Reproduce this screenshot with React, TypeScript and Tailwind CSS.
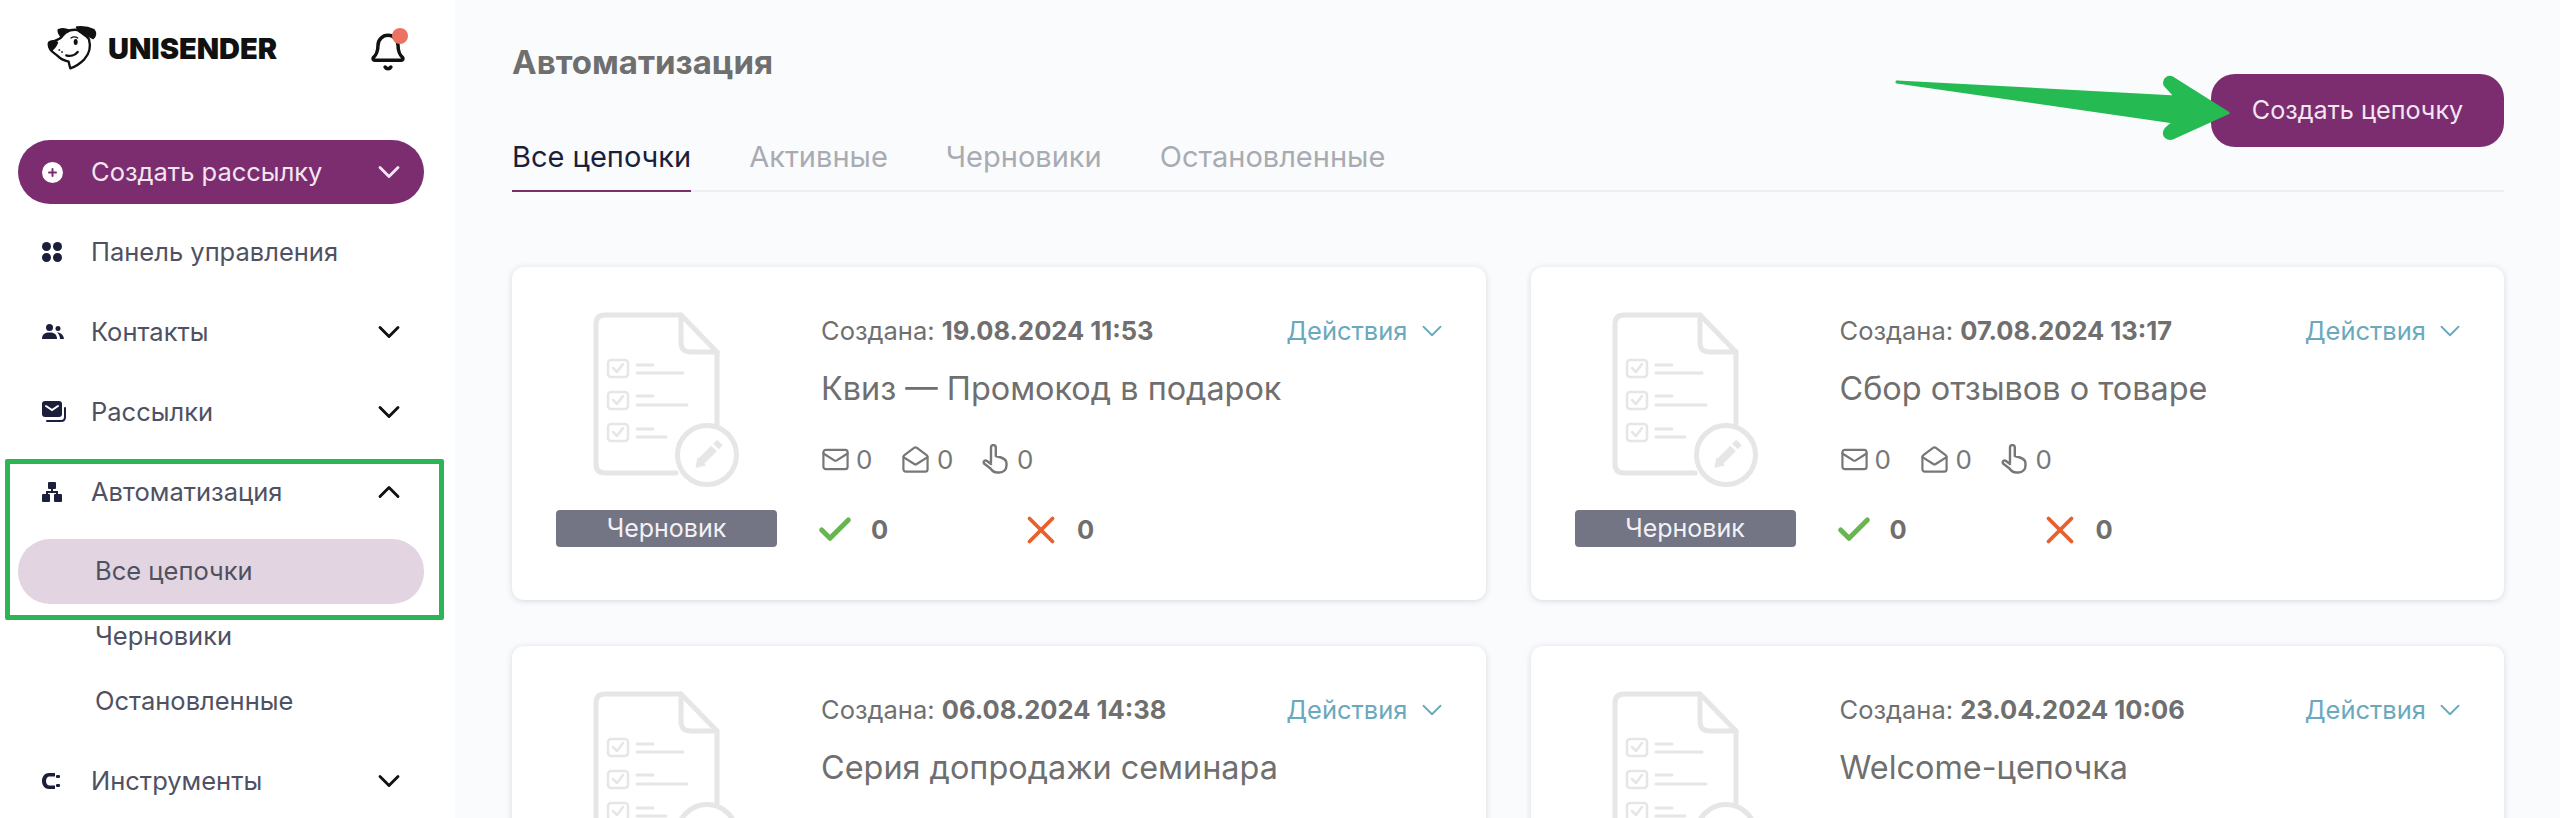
import { Bell, Check, ChevronDown, ChevronUp, Mail, MailOpen, X } from "lucide-react";
import type { ReactNode } from "react";

type Chain = {
  created: string;
  title: string;
};

const chains: Chain[] = [
  { created: "19.08.2024 11:53", title: "Квиз — Промокод в подарок" },
  { created: "07.08.2024 13:17", title: "Сбор отзывов о товаре" },
  { created: "06.08.2024 14:38", title: "Серия допродажи семинара" },
  { created: "23.04.2024 10:06", title: "Welcome-цепочка" },
];

function DogLogo() {
  return (
    <svg width="50" height="45" viewBox="20 15 150 135" fill="none" stroke="#111" strokeWidth="7" strokeLinejoin="round" strokeLinecap="round">
      <path d="M32 68 C45 60 58 60 64 50 C66 44 70 38 76 36 C88 30 100 28 112 30 C125 40 140 48 146 58 C152 80 148 100 132 118 C120 130 105 140 90 145 C88 138 86 130 85 125 C72 122 60 116 50 106 C42 100 34 95 30 88 Z" />
      <path d="M55 30 C65 26 78 28 86 32 C78 36 70 40 64 50 C58 44 54 38 55 30 Z" fill="#111" />
      <path d="M110 22 C128 20 148 24 160 30 C166 38 166 48 158 54 C150 50 140 44 128 38 C120 34 114 28 110 22 Z" fill="#111" />
      <path d="M26 68 C32 62 44 62 50 68 C46 78 40 86 32 90 C26 84 24 76 26 68 Z" fill="#111" />
      <ellipse cx="106" cy="66" rx="6" ry="9" fill="#111" stroke="none" />
      <path d="M92 54 C98 50 106 50 112 54" strokeWidth="4" />
      <path d="M78 106 C90 110 104 106 112 96" />
      <path d="M56 90 H58 M64 96 H66" strokeWidth="4" />
    </svg>
  );
}

function GridIcon() {
  return (
    <div className="grid w-5 grid-cols-2 gap-[2px]">
      <span className="h-[9px] w-[9px] rounded-full bg-[#1c1f3c]" />
      <span className="h-[9px] w-[9px] rounded-full bg-[#1c1f3c]" />
      <span className="h-[9px] w-[9px] rounded-full bg-[#1c1f3c]" />
      <span className="h-[9px] w-[9px] rounded-full bg-[#1c1f3c]" />
    </div>
  );
}

function PeopleIcon() {
  return (
    <svg width="22" height="16" viewBox="0 0 22 16" fill="#1c1f3c">
      <circle cx="7.5" cy="3.5" r="3.5" />
      <path d="M0 15 C0 10 3 8.5 7.5 8.5 S15 10 15 15 Z" />
      <circle cx="16" cy="4.5" r="2.5" />
      <path d="M15 8.5 C19 8.5 21.5 11 22 15 H18 C18 12.5 17 10 15 8.5 Z" />
    </svg>
  );
}

function MailStackIcon() {
  return (
    <svg width="24" height="22" viewBox="0 0 24 22" fill="none">
      <rect x="0" y="0" width="20" height="16" rx="3" fill="#1c1f3c" />
      <path d="M4 5 L10 9 L16 5" stroke="#fff" strokeWidth="2" strokeLinecap="round" />
      <path d="M23 7 V16 C23 19 21 20 19 20 H5" stroke="#1c1f3c" strokeWidth="2" strokeLinecap="round" />
    </svg>
  );
}

function TreeIcon() {
  return (
    <svg width="20" height="20" viewBox="0 0 20 20" fill="#1c1f3c">
      <rect x="6" y="0" width="8" height="7" rx="1" />
      <rect x="0" y="12" width="8" height="8" rx="1" />
      <rect x="12" y="12" width="8" height="8" rx="1" />
      <path d="M9 7 H11 V9 H16 V12 H14 V11 H6 V12 H4 V9 H9 Z" />
    </svg>
  );
}

function ToolIcon() {
  return (
    <svg width="18" height="16" viewBox="0 0 18 16" fill="#1c1f3c">
      <path d="M13 0 H7 C3 0 0 3.5 0 8 S3 16 7 16 H13 V12.5 H7.5 C5.5 12.5 4 10.5 4 8 S5.5 3.5 7.5 3.5 H13 Z" />
      <rect x="14" y="2" width="4" height="3" rx="1" />
      <rect x="14" y="11" width="4" height="3" rx="1" />
    </svg>
  );
}

function PlusIcon() {
  return (
    <span className="flex h-[21px] w-[21px] items-center justify-center rounded-full bg-white">
      <svg width="9" height="9" viewBox="0 0 9 9" stroke="#7b2d70" strokeWidth="2" strokeLinecap="round">
        <path d="M4.5 1 V8 M1 4.5 H8" />
      </svg>
    </span>
  );
}

function HandIcon() {
  return (
    <svg width="26" height="30" viewBox="0 0 26 30" fill="none" stroke="#777" strokeWidth="2.4" strokeLinecap="round" strokeLinejoin="round" className="shrink-0">
      <path d="M9 18 V3.5 a2.4 2.4 0 0 1 4.8 0 V12 l5.2 1.5 c3 1 5.5 3 5.5 6 v2 c0 4 -3 7 -7 7 h-2 c-3 0 -5 -1 -7 -4 L2 19.5 c-1 -2 1 -4 3 -2.5 L9 20" />
    </svg>
  );
}

function NavRow({ icon, label, open }: { icon: ReactNode; label: string; open?: boolean }) {
  return (
    <div className="flex h-20 items-center pl-[42px] pr-[48px] text-[#4f5163]">
      <span className="flex w-[49px] shrink-0 items-center">{icon}</span>
      <span className="flex-1">{label}</span>
      {open === undefined ? null : open ? (
        <ChevronUp size={36} strokeWidth={1.9} className="text-[#111]" />
      ) : (
        <ChevronDown size={36} strokeWidth={1.9} className="text-[#111]" />
      )}
    </div>
  );
}

function Sidebar() {
  return (
    <aside className="relative h-[818px] w-[455px] shrink-0 overflow-hidden bg-white text-[25.5px]">
      <div className="flex h-[140px] items-start pl-[47px] pr-[47px] pt-[25px]">
        <DogLogo />
        <span className="ml-[11px] mt-[9px] flex-1 text-[29px] font-black leading-[30px] text-[#111]">UNISENDER</span>
        <div className="relative mt-[7px]">
          <Bell size={40} strokeWidth={2.1} className="text-[#111]" />
          <span className="absolute -top-1 left-6 h-4 w-4 rounded-full bg-[#ec7363]" />
        </div>
      </div>

      <div className="ml-[18px] flex h-16 w-[406px] items-center rounded-[32px] bg-[#7b2d70] pl-6 pr-[17px] text-[#f3e6f1]">
        <span className="flex w-[49px] shrink-0 items-center"><PlusIcon /></span>
        <span className="flex-1">Создать рассылку</span>
        <ChevronDown size={36} strokeWidth={1.9} className="text-[#f3e6f1]" />
      </div>

      <div className="mt-2">
        <NavRow icon={<GridIcon />} label="Панель управления" />
        <NavRow icon={<PeopleIcon />} label="Контакты" open={false} />
        <NavRow icon={<MailStackIcon />} label="Рассылки" open={false} />
        <NavRow icon={<TreeIcon />} label="Автоматизация" open />
      </div>

      <div className="ml-[18px] mt-[7px] flex h-[65px] w-[406px] items-center rounded-[32px] bg-[#e2d5e1] pl-[77px] text-[#4f5163]">Все цепочки</div>
      <div className="flex h-[65px] items-center pl-[95px] text-[#4f5163]">Черновики</div>
      <div className="flex h-[65px] items-center pl-[95px] text-[#4f5163]">Остановленные</div>

      <div className="mt-[7px]">
        <NavRow icon={<ToolIcon />} label="Инструменты" open={false} />
      </div>

      <div className="absolute left-[5px] top-[459px] h-[161px] w-[439px] rounded-[2px] border-[5px] border-[#2cb557]" />
    </aside>
  );
}

function DraftArt() {
  return (
    <svg width="147" height="175" viewBox="0 0 147 175" fill="none" stroke="#e6e6e6" strokeWidth="5" strokeLinecap="round" strokeLinejoin="round">
      <path d="M83 161 H12 C6 161 3 158 3 152 V12 C3 6 6 3 12 3 H88 L124 40 V112" />
      <path d="M88 3 V30 C88 37 91 40 98 40 H124" />
      <circle cx="114" cy="143" r="29.5" />
      <g strokeWidth="2.5">
        <rect x="15" y="48" width="20" height="17" rx="3" />
        <rect x="15" y="80" width="20" height="17" rx="3" />
        <rect x="15" y="112" width="20" height="17" rx="3" />
        <path d="M20 56 L24 60 L30 52 M20 88 L24 92 L30 84 M20 120 L24 124 L30 116" />
      </g>
      <g strokeWidth="3">
        <path d="M44 53 H60 M44 61 H90 M44 84 H60 M44 93 H94 M44 117 H60 M44 125 H73" />
      </g>
      <path d="M103 155 L105 146 L112 153 Z" fill="#e6e6e6" strokeWidth="1" />
      <path d="M108 149.5 L121 136.5" strokeWidth="8" strokeLinecap="butt" />
      <path d="M123 134.5 L127 130.5" strokeWidth="8" strokeLinecap="butt" />
    </svg>
  );
}

function ChainCard({ created, title }: Chain) {
  return (
    <div className="flex h-[333px] gap-11 rounded-xl bg-white pl-11 pr-[45px] pt-[45px] shadow-[0_1px_6px_rgba(40,45,70,0.16)]">
      <div className="flex w-[221px] shrink-0 flex-col items-center">
        <DraftArt />
        <span className="mt-[23px] flex h-[37px] w-full items-center justify-center rounded-[4px] bg-[#737585] text-[25px] text-[#f2f2f5]">Черновик</span>
      </div>
      <div className="min-w-0 flex-1 pt-[3px] text-[#6f6f6f]">
        <div className="flex h-8 items-center justify-between text-[25.5px]">
          <span>
            Создана: <b className="font-bold">{created}</b>
          </span>
          <span className="-mr-[8px] flex items-center gap-[7px] text-[#6aa9bd]">
            Действия <ChevronDown size={34} strokeWidth={1.3} />
          </span>
        </div>
        <div className="mt-[20px] text-[32.4px] leading-[44px]">{title}</div>
        <div className="mt-[32px] flex h-8 items-center text-[26px] text-[#777]">
          <Mail size={29} strokeWidth={1.8} className="shrink-0" />
          <span className="ml-[6px] w-[45px]">0</span>
          <MailOpen size={29} strokeWidth={1.8} className="shrink-0" />
          <span className="ml-[7px] w-[45px]">0</span>
          <HandIcon />
          <span className="ml-[9px]">0</span>
        </div>
        <div className="mt-[39px] flex h-8 items-center text-[25.5px] font-bold">
          <Check size={40} strokeWidth={3} className="-ml-[6px] shrink-0 text-[#68b552]" />
          <span className="ml-[16px] w-[147px]">0</span>
          <X size={46} strokeWidth={2} className="shrink-0 text-[#e8602f]" />
          <span className="ml-[13px]">0</span>
        </div>
      </div>
    </div>
  );
}

function Main() {
  return (
    <main className="relative h-[818px] min-w-0 flex-1 overflow-hidden bg-[#fafbfd] pl-[57px] pr-[56px]">
      <h1 className="pt-[40px] text-[33px] font-bold leading-[44px] text-[#6f6f6f]">Автоматизация</h1>
      <div className="mt-[53px] flex gap-[58px] border-b-2 border-[#eeeff2] text-[29px] text-[#a9abb3]">
        <span className="-mb-[2px] border-b-2 border-[#7b2d70] pb-[13px] leading-[40px] text-[#1c1f3c]">Все цепочки</span>
        <span className="leading-[40px]">Активные</span>
        <span className="leading-[40px]">Черновики</span>
        <span className="leading-[40px]">Остановленные</span>
      </div>

      <div className="mt-[75px] grid grid-cols-2 gap-x-[45px] gap-y-[46px]">
        {chains.map((c) => (
          <ChainCard key={c.created} {...c} />
        ))}
      </div>

      <button className="absolute left-[1756px] top-[74px] h-[73px] w-[293px] rounded-[24px] bg-[#7b2d70] text-[25.2px] text-[#f3e6f1]">Создать цепочку</button>

      <svg className="absolute left-[1430px] top-[70px]" width="360" height="80" viewBox="0 0 360 80" fill="#25bb52" stroke="#25bb52" strokeWidth="3" strokeLinejoin="round">
        <path d="M12 12 L291 27 L280 15 C278 9 284 5 289 9 L343 43 L290 67 C283 71 276 65 281 59 L289 52 Z" />
      </svg>
    </main>
  );
}

export default function App() {
  return (
    <div className="flex h-[818px] w-[2560px] overflow-hidden font-['Inter',sans-serif]">
      <Sidebar />
      <Main />
    </div>
  );
}
